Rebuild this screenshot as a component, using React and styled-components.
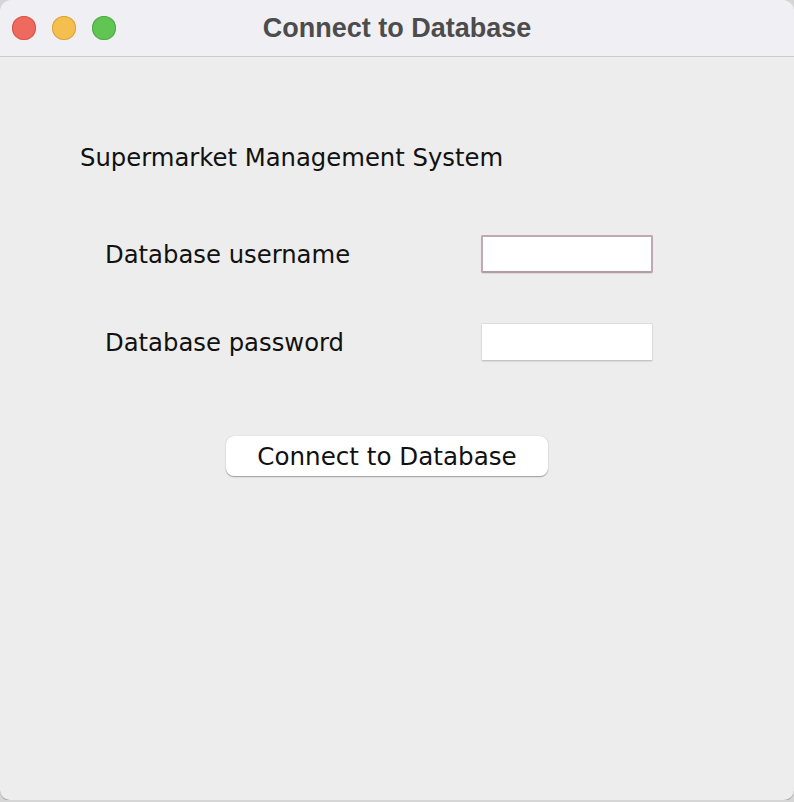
import React from 'react';
import styled, { createGlobalStyle } from 'styled-components';

const Global = createGlobalStyle`
  html, body {
    margin: 0;
    padding: 0;
    background: #d6d6d6;
  }
  body {
    font-family: "DejaVu Sans", "Liberation Sans", sans-serif;
  }
`;

const Window = styled.div`
  width: 794px;
  height: 800px;
  display: flex;
  flex-direction: column;
  background: #ededed;
  border-radius: 12px 12px 10px 10px;
  overflow: hidden;
  box-shadow: 0 1px 0 #a8a8a8;
`;

const TitleBar = styled.div`
  height: 56px;
  flex: none;
  display: flex;
  align-items: center;
  padding: 0 12px;
  background: #f0eff4;
  border-bottom: 1px solid #cbcbcb;
  position: relative;
`;

const Lights = styled.div`
  display: flex;
  gap: 16px;
`;

const Light = styled.span`
  width: 24px;
  height: 24px;
  border-radius: 50%;
  background: ${p => p.color};
  box-shadow: inset 0 0 0 1px ${p => p.edge};
`;

const WindowTitle = styled.div`
  position: absolute;
  left: 0;
  right: 0;
  text-align: center;
  font-family: "Liberation Sans", Arial, sans-serif;
  font-weight: bold;
  font-size: 27px;
  color: #4c4c4c;
  pointer-events: none;
`;

const Content = styled.div`
  flex: 1;
  padding: 87px 0 0 80px;
  display: flex;
  flex-direction: column;
`;

const Heading = styled.div`
  font-size: 24.3px;
  color: #111;
  line-height: 28px;
`;

const Form = styled.div`
  display: grid;
  grid-template-columns: 376px 172px;
  row-gap: 50px;
  margin: 63px 0 0 25px;
  align-items: center;
`;

const Label = styled.label`
  font-size: 24.3px;
  color: #111;
`;

const Field = styled.input`
  box-sizing: border-box;
  width: 172px;
  height: 38px;
  background: #fff;
  border: ${p => (p.focused ? '2px solid #c2a8b4' : '1px solid #dcdcdc')};
  border-bottom-color: ${p => (p.focused ? '#b799a8' : '#c4c4c4')};
  border-radius: 2px;
  outline: none;
  box-shadow: 0 1px 1px rgba(0, 0, 0, 0.08);
`;

const ButtonRow = styled.div`
  display: flex;
  margin: 75px 0 0 146px;
`;

const Button = styled.button`
  width: 322px;
  height: 40px;
  background: #fff;
  border: none;
  border-radius: 8px;
  box-shadow: 0 0.5px 1px rgba(0, 0, 0, 0.25), 0 1px 2px rgba(0, 0, 0, 0.12);
  font-family: "DejaVu Sans", sans-serif;
  font-size: 24.6px;
  color: #111;
  padding: 0;
`;

export default function App() {
  return (
    <>
      <Global />
      <Window>
        <TitleBar>
          <Lights>
            <Light color="#ee6a5e" edge="#d4574c" />
            <Light color="#f5bf4f" edge="#d9a33a" />
            <Light color="#61c554" edge="#4fa944" />
          </Lights>
          <WindowTitle>Connect to Database</WindowTitle>
        </TitleBar>
        <Content>
          <Heading>Supermarket Management System</Heading>
          <Form>
            <Label>Database username</Label>
            <Field focused />
            <Label>Database password</Label>
            <Field type="password" />
          </Form>
          <ButtonRow>
            <Button>Connect to Database</Button>
          </ButtonRow>
        </Content>
      </Window>
    </>
  );
}
